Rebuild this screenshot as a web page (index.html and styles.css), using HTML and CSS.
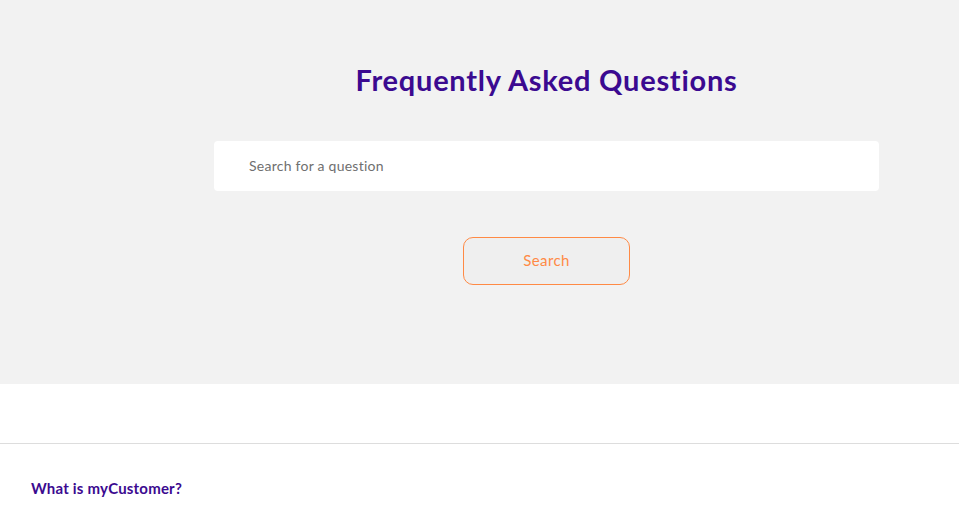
FILE: index.html
```html
<!DOCTYPE html>
<html lang="en">
<head>
<meta charset="utf-8">
<title>FAQ</title>
<link rel="stylesheet" href="styles.css">
</head>
<body>
<section class="hero">
  <div class="hero-inner">
    <h1 class="title">Frequently Asked Questions</h1>
    <div class="search-box">
      <input class="search-input" type="text" placeholder="Search for a question">
    </div>
    <button class="search-btn" type="button">Search</button>
  </div>
</section>
<section class="faq">
  <div class="faq-item">
    <h2 class="faq-q">What is myCustomer?</h2>
  </div>
</section>
</body>
</html>
```
FILE: styles.css
```css
* { box-sizing: border-box; }
html, body { margin: 0; padding: 0; }
body {
  font-family: "Lato", "Open Sans", sans-serif;
  background: #ffffff;
  width: 959px;
  height: 523px;
  overflow: hidden;
}
.hero {
  background: #f2f2f2;
  height: 384px;
  padding-left: 134px;
}
.hero-inner {
  display: flex;
  flex-direction: column;
  align-items: center;
  padding-top: 60px;
}
.title {
  margin: 0;
  font-size: 29px;
  font-weight: 700;
  color: #3b0a90;
  line-height: 40px;
  letter-spacing: 0.75px;
}
.search-box {
  margin-top: 41px;
  width: 665px;
  height: 50px;
  background: #ffffff;
  border-radius: 4px;
  display: flex;
  align-items: center;
  padding-left: 33px;
  padding-bottom: 1px;
}
.search-input {
  border: none;
  outline: none;
  background: transparent;
  font-family: inherit;
  font-size: 14px;
  letter-spacing: 0.25px;
  color: #333;
  width: 100%;
}
.search-input::placeholder { color: #6f6f6f; }
.search-btn {
  margin-top: 46px;
  width: 167px;
  height: 48px;
  background: #efefef;
  border: 1px solid #ff8a45;
  border-radius: 10px;
  color: #ff8a45;
  font-family: inherit;
  font-size: 15px;
  letter-spacing: 0.4px;
  padding: 0 0 3px;
}
.faq {
  padding-top: 59px;
}
.faq-item {
  border-top: 1px solid #dddddd;
  padding: 34px 31px;
}
.faq-q {
  margin: 0;
  font-size: 15px;
  font-weight: 700;
  color: #3b0a90;
  line-height: 20px;
  letter-spacing: 0.2px;
}
```
